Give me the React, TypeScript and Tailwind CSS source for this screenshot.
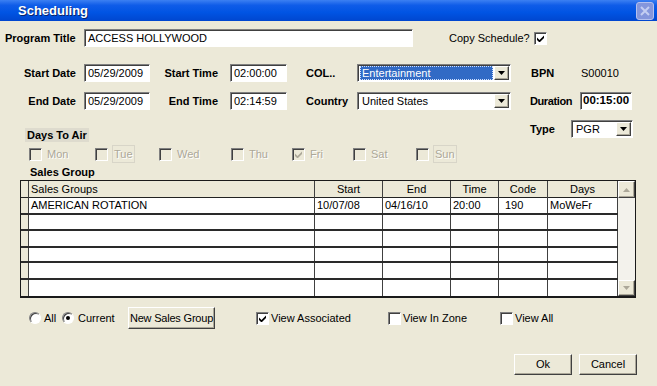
import React from "react";

const sunken =
  "border border-t-[#808080] border-l-[#808080] border-r-white border-b-white shadow-[inset_1px_1px_0_#404040]";
const raised =
  "border border-t-white border-l-white border-r-[#404040] border-b-[#404040] shadow-[inset_-1px_-1px_0_#aca899]";

function Check({ gray = false }: { gray?: boolean }) {
  return (
    <svg width="7" height="7" viewBox="0 0 7 7">
      <polygon
        points="0,2.5 2.5,5 7,0.5 7,3 2.5,7.5 0,5"
        fill={gray ? "#aca899" : "#000"}
      />
    </svg>
  );
}

function CheckBox({ checked = false, disabled = false }: { checked?: boolean; disabled?: boolean }) {
  return (
    <span
      className={`w-[13px] h-[13px] flex items-center justify-center shrink-0 ${sunken} ${
        disabled ? "bg-[#ECE9D8]" : "bg-white"
      }`}
    >
      {checked && <Check gray={disabled} />}
    </span>
  );
}

function Radio({ checked = false }: { checked?: boolean }) {
  return (
    <span className="w-[12px] h-[12px] rounded-full bg-white border border-t-[#808080] border-l-[#808080] border-r-white border-b-white shadow-[inset_1px_1px_0_#404040] flex items-center justify-center shrink-0">
      {checked && <span className="w-[4px] h-[4px] rounded-full bg-black" />}
    </span>
  );
}

function TextBox({ value, width, bold = false }: { value: string; width: string; bold?: boolean }) {
  return (
    <div
      className={`${width} h-[18px] bg-white ${sunken} flex items-center whitespace-nowrap overflow-hidden ${
        bold ? "font-bold text-[11.5px] pl-[2px]" : "px-[3px]"
      }`}
    >
      {value}
    </div>
  );
}

function Arrow({ gray = false, up = false }: { gray?: boolean; up?: boolean }) {
  return (
    <svg width="7" height="4" viewBox="0 0 7 4">
      <polygon points={up ? "0,4 7,4 3.5,0" : "0,0 7,0 3.5,4"} fill={gray ? "#aca899" : "#000"} />
    </svg>
  );
}

function Select({ value, width, selected = false }: { value: string; width: string; selected?: boolean }) {
  return (
    <div className={`${width} h-[18px] bg-white ${sunken} flex items-stretch p-[1px]`}>
      <div className="flex-1 flex items-center pl-[1px] pr-[1px]">
        <span
          className={`flex-1 h-full flex items-center px-[2px] ${
            selected ? "bg-[#316AC5] text-white outline-1 outline-dotted outline-[#cfe0ff] -outline-offset-1" : ""
          }`}
        >
          {value}
        </span>
      </div>
      <div className={`w-[15px] bg-[#ECE9D8] ${raised} flex items-center justify-center`}>
        <Arrow />
      </div>
    </div>
  );
}

function DayBox({ label, checked = false, boxed = false, width }: { label: string; checked?: boolean; boxed?: boolean; width: string }) {
  return (
    <div className={`${width} flex items-center gap-[4px]`}>
      <CheckBox checked={checked} disabled />
      <span
        className={`text-[#aca899] [text-shadow:1px_1px_0_#ffffff] px-[1px] ${
          boxed ? "border border-[#d8d5c8]" : ""
        }`}
      >
        {label}
      </span>
    </div>
  );
}

const cols = "grid grid-cols-[8px_286px_68px_68px_48px_49px_70px]";
const rowHeights = ["h-[17px]", "h-[16px]", "h-[17px]", "h-[16px]", "h-[17px]", "h-[16px]"];

function SalesGrid() {
  const rows = [
    ["AMERICAN ROTATION", "10/07/08", "04/16/10", "20:00", "190", "MoWeFr"],
    ["", "", "", "", "", ""],
    ["", "", "", "", "", ""],
    ["", "", "", "", "", ""],
    ["", "", "", "", "", ""],
    ["", "", "", "", "", ""],
  ];
  const heads = ["Sales Groups", "Start", "End", "Time", "Code", "Days"];
  return (
    <div className="ml-[20px] w-[616px] h-[118px] border border-[#1a1a1a] border-b-2 flex bg-white text-[11px]">
      <div className="w-[597px] flex flex-col">
        <div className={`${cols} h-[17px] bg-[#ECE9D8] border-b border-[#222]`}>
          <div className="border-r border-[#404040]" />
          {heads.map((h, i) => (
            <div
              key={h}
              className={`border-r border-[#404040] flex items-center ${i === 0 ? "pl-[2px]" : "justify-center"}`}
            >
              {h}
            </div>
          ))}
        </div>
        {rows.map((r, ri) => (
          <div key={ri} className={`${cols} ${rowHeights[ri]} ${ri < 5 ? "border-b-2 border-[#2a2a2a]" : ""}`}>
            <div className="bg-[#ECE9D8] border-r border-[#404040]" />
            {r.map((c, ci) => (
              <div key={ci} className="border-r border-[#404040] flex items-center pl-[2px] overflow-hidden whitespace-nowrap">
                {ci === 4 && c ? <span className="pl-[4px]">{c}</span> : c}
              </div>
            ))}
          </div>
        ))}
      </div>
      <div className="w-[17px] bg-[#f3f2ec] flex flex-col justify-between">
        <div className={`h-[17px] bg-[#ECE9D8] ${raised} flex items-center justify-center`}>
          <Arrow gray up />
        </div>
        <div className={`h-[16px] bg-[#ECE9D8] ${raised} flex items-center justify-center`}>
          <Arrow gray />
        </div>
      </div>
    </div>
  );
}

export default function App() {
  return (
    <div className="w-[657px] h-[386px] bg-[#ECE9D8] font-['Liberation_Sans',Arial,sans-serif] text-[11px] text-black flex flex-col overflow-hidden">
      {/* Title bar */}
      <div className="h-[21px] shrink-0 flex items-center pl-[18px] pr-[3px] bg-[linear-gradient(to_bottom,#3c80f2_0%,#0f5ce8_25%,#0054e3_60%,#0046cf_100%)]">
        <span className="text-white font-bold text-[13px] [text-shadow:1px_1px_0_#0a246a]">Scheduling</span>
        <div className="ml-auto w-[18px] h-[18px] rounded-[3px] bg-[#8496dc] border border-[#b4c0ee] flex items-center justify-center">
          <svg width="10" height="10" viewBox="0 0 10 10">
            <path d="M1 1 L9 9 M9 1 L1 9" stroke="#c4cef2" strokeWidth="2" />
          </svg>
        </div>
      </div>

      {/* Program title */}
      <div className="mt-[8px] h-[18px] flex items-center">
        <span className="w-[84px] pl-[5px] font-bold">Program Title</span>
        <TextBox value="ACCESS HOLLYWOOD" width="w-[329px]" />
        <span className="ml-[36px]">Copy Schedule?</span>
        <span className="ml-[4px]">
          <CheckBox checked />
        </span>
      </div>

      {/* Start row */}
      <div className="mt-[17px] h-[18px] flex items-center">
        <span className="w-[76px] text-right font-bold">Start Date</span>
        <span className="ml-[8px]">
          <TextBox value="05/29/2009" width="w-[66px]" />
        </span>
        <span className="w-[68px] text-right font-bold">Start Time</span>
        <span className="ml-[12px]">
          <TextBox value="02:00:00" width="w-[57px]" />
        </span>
        <span className="ml-[19px] w-[51px] font-bold">COL..</span>
        <Select value="Entertainment" width="w-[154px]" selected />
        <span className="ml-[20px] w-[50px] font-bold">BPN</span>
        <span>S00010</span>
      </div>

      {/* End row */}
      <div className="mt-[10px] h-[18px] flex items-center">
        <span className="w-[76px] text-right font-bold">End Date</span>
        <span className="ml-[8px]">
          <TextBox value="05/29/2009" width="w-[66px]" />
        </span>
        <span className="w-[68px] text-right font-bold">End Time</span>
        <span className="ml-[12px]">
          <TextBox value="02:14:59" width="w-[57px]" />
        </span>
        <span className="ml-[19px] w-[51px] font-bold">Country</span>
        <Select value="United States" width="w-[154px]" />
        <span className="ml-[19px] w-[50px] font-bold tracking-[-0.4px]">Duration</span>
        <TextBox value="00:15:00" width="w-[52px]" bold />
      </div>

      {/* Days to air / Type */}
      <div className="mt-[10px] h-[22px] flex items-start">
        <div className="w-[530px] h-full flex items-end pl-[25px]">
          <span className="h-[14px] px-[2px] bg-[#dedbce] font-bold flex items-center">Days To Air</span>
        </div>
        <span className="w-[41px] h-[18px] flex items-center font-bold">Type</span>
        <Select value="PGR" width="w-[62px]" />
      </div>

      {/* Day checkboxes */}
      <div className="mt-[5px] h-[14px] flex items-center pl-[29px]">
        <DayBox label="Mon" width="w-[66px]" />
        <DayBox label="Tue" width="w-[64px]" boxed />
        <DayBox label="Wed" width="w-[72px]" />
        <DayBox label="Thu" width="w-[61px]" />
        <DayBox label="Fri" width="w-[61px]" checked />
        <DayBox label="Sat" width="w-[63px]" />
        <DayBox label="Sun" width="w-[60px]" boxed />
      </div>

      {/* Sales group */}
      <div className="mt-[4px] h-[15px] pl-[30px] font-bold flex items-center">Sales Group</div>
      <SalesGrid />

      {/* Bottom options */}
      <div className="mt-[9px] h-[22px] flex items-center">
        <div className="pl-[29px] w-[62px] flex items-center gap-[3px]">
          <Radio />
          <span>All</span>
        </div>
        <div className="w-[66px] flex items-center gap-[4px]">
          <Radio checked />
          <span>Current</span>
        </div>
        <button className={`w-[87px] h-[22px] bg-[#ECE9D8] ${raised} text-[11px] whitespace-nowrap px-0 tracking-[-0.2px]`}>
          New Sales Group
        </button>
        <div className="ml-[41px] w-[132px] flex items-center gap-[2px]">
          <CheckBox checked />
          <span>View Associated</span>
        </div>
        <div className="w-[112px] flex items-center gap-[2px]">
          <CheckBox />
          <span>View In Zone</span>
        </div>
        <div className="flex items-center gap-[2px]">
          <CheckBox />
          <span>View All</span>
        </div>
      </div>

      {/* Ok / Cancel */}
      <div className="mt-[25px] h-[21px] flex items-center pl-[514px] gap-[7px]">
        <button className={`w-[58px] h-[21px] bg-[#ECE9D8] ${raised} text-[11px]`}>Ok</button>
        <button className={`w-[58px] h-[21px] bg-[#ECE9D8] ${raised} text-[11px]`}>Cancel</button>
      </div>
    </div>
  );
}
